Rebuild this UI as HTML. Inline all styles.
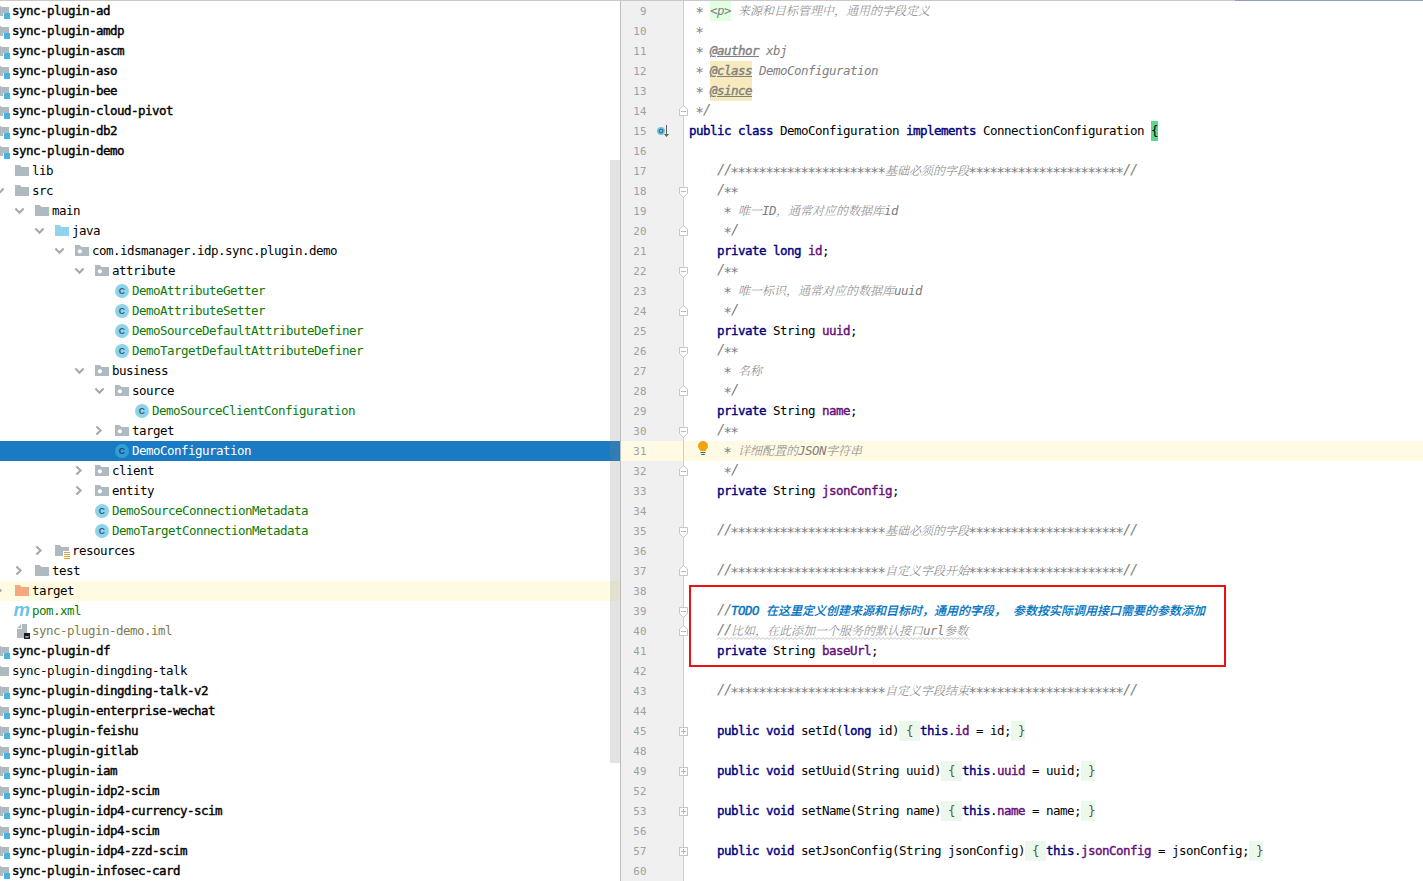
<!DOCTYPE html>
<html lang="zh-CN">
<head>
<meta charset="utf-8">
<title>DemoConfiguration.java</title>
<style>
html,body{margin:0;padding:0;background:#fff;}
body{width:1423px;height:881px;position:relative;overflow:hidden;font-family:"DejaVu Sans Mono", "Liberation Mono", monospace;font-size:12.5px;letter-spacing:-0.526px;color:#000;}
.ic{position:absolute;display:block;overflow:visible;}
.topl{position:absolute;left:0;top:0;width:1235px;height:1px;background:#c9c9c9;}
.topr{position:absolute;left:1235px;top:0;width:188px;height:1px;background:#8f9dba;}
.t,.cl,.ln{position:absolute;height:20px;line-height:20px;white-space:pre;}
.t.b{-webkit-text-stroke:0.4px #000;}
.t.g{color:#0a7a0a;}
.t.o{color:#7c7c52;}
.t.w{color:#fff;}
.selrow{position:absolute;left:0;width:620px;height:20px;background:#1a7bc4;}
.yrow{position:absolute;left:0;width:620px;height:20px;background:#fffbe3;}
.sb{position:absolute;left:610px;top:160px;width:10px;height:603px;background:rgba(128,128,128,0.22);}
.gut{position:absolute;left:620px;top:1px;width:63px;height:880px;background:#f0f0f0;border-left:1px solid #bdbdbd;box-sizing:border-box;}
.gline{position:absolute;left:683px;top:1px;width:1px;height:880px;background:#cfcfcf;}
.cur{position:absolute;left:621px;width:802px;height:20px;background:#fffae3;}
.ln{left:621px;width:25.8px;text-align:right;color:#a0a0a0;font-size:10.8px;letter-spacing:0.3px;margin-top:0.5px;}
.cl{left:689px;}
.cl i, .cl b{font-style:normal;font-weight:normal;}
.cl .c{font-style:italic;color:#808080;}
.cl .z{font-style:italic;font-weight:300;color:#858585;font-family:"Liberation Serif","Noto Serif CJK SC",serif;font-size:12px;letter-spacing:0;line-height:0;}
.cl .k{color:#000080;-webkit-text-stroke:0.4px #000080;}
.cl .f{color:#660e7a;-webkit-text-stroke:0.4px #660e7a;}
.cl .p,.cl .wr,.cl .br,.cl .fd{display:inline-block;height:20px;line-height:20px;vertical-align:top;}
.cl .p{background:#e2ffe2;}
.cl .s{position:relative;top:-0.9px;font-size:13.8px;letter-spacing:-1.308px;line-height:0;}
.cl .a{position:relative;left:-0.8px;top:2.2px;font-size:14.5px;letter-spacing:-1.730px;line-height:0;}
.cl .tag{-webkit-text-stroke:0.4px #808080;text-decoration:underline;}
.cl .wr{background:#f7ebbd;}
.cl .br{background:#5ad890;}
.cl .fd{background:#edf8ec;color:#5a5a3a;}
.cl .td{font-style:italic;color:#0073bf;-webkit-text-stroke:0.4px #0073bf;}
.cl .tz{font-weight:500;-webkit-text-stroke:0.12px #0073bf;font-style:italic;color:#0073bf;font-family:"Liberation Sans","Noto Sans CJK SC",sans-serif;font-size:12px;letter-spacing:0;line-height:0;}

.redbox{position:absolute;left:689px;top:585px;width:537px;height:82px;border:2px solid #f00f0f;box-sizing:border-box;}
</style>
</head>
<body>
<div class="gut"></div>
<svg class="ic" style="left:-5px;top:5px" width="16" height="16" viewBox="0 0 16 16"><path d="M0 0H4.6L6.6 2H14V8H8V11H0Z" fill="#afb9c0"/><rect x="9" y="8" width="6" height="6" fill="#40b6e0"/></svg>
<div class="t b" style="left:12px;top:1px">sync-plugin-ad</div>
<svg class="ic" style="left:-5px;top:25px" width="16" height="16" viewBox="0 0 16 16"><path d="M0 0H4.6L6.6 2H14V8H8V11H0Z" fill="#afb9c0"/><rect x="9" y="8" width="6" height="6" fill="#40b6e0"/></svg>
<div class="t b" style="left:12px;top:21px">sync-plugin-amdp</div>
<svg class="ic" style="left:-5px;top:45px" width="16" height="16" viewBox="0 0 16 16"><path d="M0 0H4.6L6.6 2H14V8H8V11H0Z" fill="#afb9c0"/><rect x="9" y="8" width="6" height="6" fill="#40b6e0"/></svg>
<div class="t b" style="left:12px;top:41px">sync-plugin-ascm</div>
<svg class="ic" style="left:-5px;top:65px" width="16" height="16" viewBox="0 0 16 16"><path d="M0 0H4.6L6.6 2H14V8H8V11H0Z" fill="#afb9c0"/><rect x="9" y="8" width="6" height="6" fill="#40b6e0"/></svg>
<div class="t b" style="left:12px;top:61px">sync-plugin-aso</div>
<svg class="ic" style="left:-5px;top:85px" width="16" height="16" viewBox="0 0 16 16"><path d="M0 0H4.6L6.6 2H14V8H8V11H0Z" fill="#afb9c0"/><rect x="9" y="8" width="6" height="6" fill="#40b6e0"/></svg>
<div class="t b" style="left:12px;top:81px">sync-plugin-bee</div>
<svg class="ic" style="left:-5px;top:105px" width="16" height="16" viewBox="0 0 16 16"><path d="M0 0H4.6L6.6 2H14V8H8V11H0Z" fill="#afb9c0"/><rect x="9" y="8" width="6" height="6" fill="#40b6e0"/></svg>
<div class="t b" style="left:12px;top:101px">sync-plugin-cloud-pivot</div>
<svg class="ic" style="left:-5px;top:125px" width="16" height="16" viewBox="0 0 16 16"><path d="M0 0H4.6L6.6 2H14V8H8V11H0Z" fill="#afb9c0"/><rect x="9" y="8" width="6" height="6" fill="#40b6e0"/></svg>
<div class="t b" style="left:12px;top:121px">sync-plugin-db2</div>
<svg class="ic" style="left:-5px;top:145px" width="16" height="16" viewBox="0 0 16 16"><path d="M0 0H4.6L6.6 2H14V8H8V11H0Z" fill="#afb9c0"/><rect x="9" y="8" width="6" height="6" fill="#40b6e0"/></svg>
<div class="t b" style="left:12px;top:141px">sync-plugin-demo</div>
<svg class="ic" style="left:15px;top:165px" width="14" height="11" viewBox="0 0 14 11"><path d="M0 0H4.6L6.6 2H14V11H0Z" fill="#afb9c0"/></svg>
<div class="t" style="left:32px;top:161px">lib</div>
<svg class="ic" style="left:-6px;top:187px" width="11" height="8" viewBox="0 0 11 8"><path d="M1.400 1.600L5.500 5.700L9.600 1.600" fill="none" stroke="#a8a8a8" stroke-width="2.100"/></svg>
<svg class="ic" style="left:15px;top:185px" width="14" height="11" viewBox="0 0 14 11"><path d="M0 0H4.6L6.6 2H14V11H0Z" fill="#afb9c0"/></svg>
<div class="t" style="left:32px;top:181px">src</div>
<svg class="ic" style="left:14px;top:207px" width="11" height="8" viewBox="0 0 11 8"><path d="M1.400 1.600L5.500 5.700L9.600 1.600" fill="none" stroke="#a8a8a8" stroke-width="2.100"/></svg>
<svg class="ic" style="left:35px;top:205px" width="14" height="11" viewBox="0 0 14 11"><path d="M0 0H4.6L6.6 2H14V11H0Z" fill="#afb9c0"/></svg>
<div class="t" style="left:52px;top:201px">main</div>
<svg class="ic" style="left:34px;top:227px" width="11" height="8" viewBox="0 0 11 8"><path d="M1.400 1.600L5.500 5.700L9.600 1.600" fill="none" stroke="#a8a8a8" stroke-width="2.100"/></svg>
<svg class="ic" style="left:55px;top:225px" width="14" height="11" viewBox="0 0 14 11"><path d="M0 0H4.6L6.6 2H14V11H0Z" fill="#8fd4ec"/></svg>
<div class="t" style="left:72px;top:221px">java</div>
<svg class="ic" style="left:54px;top:247px" width="11" height="8" viewBox="0 0 11 8"><path d="M1.400 1.600L5.500 5.700L9.600 1.600" fill="none" stroke="#a8a8a8" stroke-width="2.100"/></svg>
<svg class="ic" style="left:75px;top:245px" width="14" height="11" viewBox="0 0 14 11"><path d="M0 0H4.6L6.6 2H14V11H0Z" fill="#afb9c0"/><circle cx="4.9" cy="6.3" r="2.1" fill="#fff"/></svg>
<div class="t" style="left:92px;top:241px">com.idsmanager.idp.sync.plugin.demo</div>
<svg class="ic" style="left:74px;top:267px" width="11" height="8" viewBox="0 0 11 8"><path d="M1.400 1.600L5.500 5.700L9.600 1.600" fill="none" stroke="#a8a8a8" stroke-width="2.100"/></svg>
<svg class="ic" style="left:95px;top:265px" width="14" height="11" viewBox="0 0 14 11"><path d="M0 0H4.6L6.6 2H14V11H0Z" fill="#afb9c0"/><circle cx="4.9" cy="6.3" r="2.1" fill="#fff"/></svg>
<div class="t" style="left:112px;top:261px">attribute</div>
<svg class="ic" style="left:115px;top:284px" width="14" height="14" viewBox="0 0 14 14"><circle cx="7" cy="7" r="7" fill="#8cd3ec"/><text x="6.800" y="10.350" text-anchor="middle" font-family="'Liberation Sans', sans-serif" font-size="8.600" font-weight="bold" letter-spacing="0" fill="#42555d">C</text></svg>
<div class="t g" style="left:132px;top:281px">DemoAttributeGetter</div>
<svg class="ic" style="left:115px;top:304px" width="14" height="14" viewBox="0 0 14 14"><circle cx="7" cy="7" r="7" fill="#8cd3ec"/><text x="6.800" y="10.350" text-anchor="middle" font-family="'Liberation Sans', sans-serif" font-size="8.600" font-weight="bold" letter-spacing="0" fill="#42555d">C</text></svg>
<div class="t g" style="left:132px;top:301px">DemoAttributeSetter</div>
<svg class="ic" style="left:115px;top:324px" width="14" height="14" viewBox="0 0 14 14"><circle cx="7" cy="7" r="7" fill="#8cd3ec"/><text x="6.800" y="10.350" text-anchor="middle" font-family="'Liberation Sans', sans-serif" font-size="8.600" font-weight="bold" letter-spacing="0" fill="#42555d">C</text></svg>
<div class="t g" style="left:132px;top:321px">DemoSourceDefaultAttributeDefiner</div>
<svg class="ic" style="left:115px;top:344px" width="14" height="14" viewBox="0 0 14 14"><circle cx="7" cy="7" r="7" fill="#8cd3ec"/><text x="6.800" y="10.350" text-anchor="middle" font-family="'Liberation Sans', sans-serif" font-size="8.600" font-weight="bold" letter-spacing="0" fill="#42555d">C</text></svg>
<div class="t g" style="left:132px;top:341px">DemoTargetDefaultAttributeDefiner</div>
<svg class="ic" style="left:74px;top:367px" width="11" height="8" viewBox="0 0 11 8"><path d="M1.400 1.600L5.500 5.700L9.600 1.600" fill="none" stroke="#a8a8a8" stroke-width="2.100"/></svg>
<svg class="ic" style="left:95px;top:365px" width="14" height="11" viewBox="0 0 14 11"><path d="M0 0H4.6L6.6 2H14V11H0Z" fill="#afb9c0"/><circle cx="4.9" cy="6.3" r="2.1" fill="#fff"/></svg>
<div class="t" style="left:112px;top:361px">business</div>
<svg class="ic" style="left:94px;top:387px" width="11" height="8" viewBox="0 0 11 8"><path d="M1.400 1.600L5.500 5.700L9.600 1.600" fill="none" stroke="#a8a8a8" stroke-width="2.100"/></svg>
<svg class="ic" style="left:115px;top:385px" width="14" height="11" viewBox="0 0 14 11"><path d="M0 0H4.6L6.6 2H14V11H0Z" fill="#afb9c0"/><circle cx="4.9" cy="6.3" r="2.1" fill="#fff"/></svg>
<div class="t" style="left:132px;top:381px">source</div>
<svg class="ic" style="left:135px;top:404px" width="14" height="14" viewBox="0 0 14 14"><circle cx="7" cy="7" r="7" fill="#8cd3ec"/><text x="6.800" y="10.350" text-anchor="middle" font-family="'Liberation Sans', sans-serif" font-size="8.600" font-weight="bold" letter-spacing="0" fill="#42555d">C</text></svg>
<div class="t g" style="left:152px;top:401px">DemoSourceClientConfiguration</div>
<svg class="ic" style="left:95px;top:425px" width="8" height="11" viewBox="0 0 8 11"><path d="M1.400 1.600L5.600 5.600L1.400 9.600" fill="none" stroke="#a8a8a8" stroke-width="2.100"/></svg>
<svg class="ic" style="left:115px;top:425px" width="14" height="11" viewBox="0 0 14 11"><path d="M0 0H4.6L6.6 2H14V11H0Z" fill="#afb9c0"/><circle cx="4.9" cy="6.3" r="2.1" fill="#fff"/></svg>
<div class="t" style="left:132px;top:421px">target</div>
<div class="selrow" style="top:441px"></div>
<svg class="ic" style="left:115px;top:444px" width="14" height="14" viewBox="0 0 14 14"><circle cx="7" cy="7" r="7" fill="#319ed5"/><text x="6.800" y="10.350" text-anchor="middle" font-family="'Liberation Sans', sans-serif" font-size="8.600" font-weight="bold" letter-spacing="0" fill="#274556">C</text></svg>
<div class="t w" style="left:132px;top:441px">DemoConfiguration</div>
<svg class="ic" style="left:75px;top:465px" width="8" height="11" viewBox="0 0 8 11"><path d="M1.400 1.600L5.600 5.600L1.400 9.600" fill="none" stroke="#a8a8a8" stroke-width="2.100"/></svg>
<svg class="ic" style="left:95px;top:465px" width="14" height="11" viewBox="0 0 14 11"><path d="M0 0H4.6L6.6 2H14V11H0Z" fill="#afb9c0"/><circle cx="4.9" cy="6.3" r="2.1" fill="#fff"/></svg>
<div class="t" style="left:112px;top:461px">client</div>
<svg class="ic" style="left:75px;top:485px" width="8" height="11" viewBox="0 0 8 11"><path d="M1.400 1.600L5.600 5.600L1.400 9.600" fill="none" stroke="#a8a8a8" stroke-width="2.100"/></svg>
<svg class="ic" style="left:95px;top:485px" width="14" height="11" viewBox="0 0 14 11"><path d="M0 0H4.6L6.6 2H14V11H0Z" fill="#afb9c0"/><circle cx="4.9" cy="6.3" r="2.1" fill="#fff"/></svg>
<div class="t" style="left:112px;top:481px">entity</div>
<svg class="ic" style="left:95px;top:504px" width="14" height="14" viewBox="0 0 14 14"><circle cx="7" cy="7" r="7" fill="#8cd3ec"/><text x="6.800" y="10.350" text-anchor="middle" font-family="'Liberation Sans', sans-serif" font-size="8.600" font-weight="bold" letter-spacing="0" fill="#42555d">C</text></svg>
<div class="t g" style="left:112px;top:501px">DemoSourceConnectionMetadata</div>
<svg class="ic" style="left:95px;top:524px" width="14" height="14" viewBox="0 0 14 14"><circle cx="7" cy="7" r="7" fill="#8cd3ec"/><text x="6.800" y="10.350" text-anchor="middle" font-family="'Liberation Sans', sans-serif" font-size="8.600" font-weight="bold" letter-spacing="0" fill="#42555d">C</text></svg>
<div class="t g" style="left:112px;top:521px">DemoTargetConnectionMetadata</div>
<svg class="ic" style="left:35px;top:545px" width="8" height="11" viewBox="0 0 8 11"><path d="M1.400 1.600L5.600 5.600L1.400 9.600" fill="none" stroke="#a8a8a8" stroke-width="2.100"/></svg>
<svg class="ic" style="left:55px;top:545px" width="16" height="16" viewBox="0 0 16 16"><path d="M0 0H4.6L6.6 2H14V6H8V11H0Z" fill="#afb9c0"/><path d="M9 7h6v1h-6zM9 9h6v1h-6zM9 11h6v1h-6zM9 13h6v1h-6z" fill="#d9a343"/></svg>
<div class="t" style="left:72px;top:541px">resources</div>
<svg class="ic" style="left:15px;top:565px" width="8" height="11" viewBox="0 0 8 11"><path d="M1.400 1.600L5.600 5.600L1.400 9.600" fill="none" stroke="#a8a8a8" stroke-width="2.100"/></svg>
<svg class="ic" style="left:35px;top:565px" width="14" height="11" viewBox="0 0 14 11"><path d="M0 0H4.6L6.6 2H14V11H0Z" fill="#afb9c0"/></svg>
<div class="t" style="left:52px;top:561px">test</div>
<div class="yrow" style="top:581px"></div>
<svg class="ic" style="left:-5px;top:585px" width="8" height="11" viewBox="0 0 8 11"><path d="M1.400 1.600L5.600 5.600L1.400 9.600" fill="none" stroke="#a8a8a8" stroke-width="2.100"/></svg>
<svg class="ic" style="left:15px;top:585px" width="14" height="11" viewBox="0 0 14 11"><path d="M0 0H4.6L6.6 2H14V11H0Z" fill="#f4a87e"/></svg>
<div class="t" style="left:32px;top:581px">target</div>
<svg class="ic" style="left:13px;top:603px" width="20" height="16" viewBox="0 0 20 16"><text x="0.5" y="13" font-family="'Liberation Sans', sans-serif" font-size="19" font-weight="bold" font-style="italic" fill="#6cc4e6" textLength="16" lengthAdjust="spacingAndGlyphs">m</text></svg>
<div class="t g" style="left:32px;top:601px">pom.xml</div>
<svg class="ic" style="left:15px;top:624px" width="16" height="16" viewBox="0 0 16 16"><path d="M2 4.2L6.2 0V4.2Z" fill="#afb9c0"/><path d="M7 0H12V9H9V14H2V5H7Z" fill="#afb9c0"/><rect x="9" y="9" width="6" height="6" fill="#1e1e1e"/><rect x="10.300" y="12.400" width="3.400" height="1" fill="#fff"/></svg>
<div class="t o" style="left:32px;top:621px">sync-plugin-demo.iml</div>
<svg class="ic" style="left:-5px;top:645px" width="16" height="16" viewBox="0 0 16 16"><path d="M0 0H4.6L6.6 2H14V8H8V11H0Z" fill="#afb9c0"/><rect x="9" y="8" width="6" height="6" fill="#40b6e0"/></svg>
<div class="t b" style="left:12px;top:641px">sync-plugin-df</div>
<svg class="ic" style="left:-5px;top:665px" width="14" height="11" viewBox="0 0 14 11"><path d="M0 0H4.6L6.6 2H14V11H0Z" fill="#afb9c0"/></svg>
<div class="t" style="left:12px;top:661px">sync-plugin-dingding-talk</div>
<svg class="ic" style="left:-5px;top:685px" width="16" height="16" viewBox="0 0 16 16"><path d="M0 0H4.6L6.6 2H14V8H8V11H0Z" fill="#afb9c0"/><rect x="9" y="8" width="6" height="6" fill="#40b6e0"/></svg>
<div class="t b" style="left:12px;top:681px">sync-plugin-dingding-talk-v2</div>
<svg class="ic" style="left:-5px;top:705px" width="16" height="16" viewBox="0 0 16 16"><path d="M0 0H4.6L6.6 2H14V8H8V11H0Z" fill="#afb9c0"/><rect x="9" y="8" width="6" height="6" fill="#40b6e0"/></svg>
<div class="t b" style="left:12px;top:701px">sync-plugin-enterprise-wechat</div>
<svg class="ic" style="left:-5px;top:725px" width="16" height="16" viewBox="0 0 16 16"><path d="M0 0H4.6L6.6 2H14V8H8V11H0Z" fill="#afb9c0"/><rect x="9" y="8" width="6" height="6" fill="#40b6e0"/></svg>
<div class="t b" style="left:12px;top:721px">sync-plugin-feishu</div>
<svg class="ic" style="left:-5px;top:745px" width="16" height="16" viewBox="0 0 16 16"><path d="M0 0H4.6L6.6 2H14V8H8V11H0Z" fill="#afb9c0"/><rect x="9" y="8" width="6" height="6" fill="#40b6e0"/></svg>
<div class="t b" style="left:12px;top:741px">sync-plugin-gitlab</div>
<svg class="ic" style="left:-5px;top:765px" width="16" height="16" viewBox="0 0 16 16"><path d="M0 0H4.6L6.6 2H14V8H8V11H0Z" fill="#afb9c0"/><rect x="9" y="8" width="6" height="6" fill="#40b6e0"/></svg>
<div class="t b" style="left:12px;top:761px">sync-plugin-iam</div>
<svg class="ic" style="left:-5px;top:785px" width="16" height="16" viewBox="0 0 16 16"><path d="M0 0H4.6L6.6 2H14V8H8V11H0Z" fill="#afb9c0"/><rect x="9" y="8" width="6" height="6" fill="#40b6e0"/></svg>
<div class="t b" style="left:12px;top:781px">sync-plugin-idp2-scim</div>
<svg class="ic" style="left:-5px;top:805px" width="16" height="16" viewBox="0 0 16 16"><path d="M0 0H4.6L6.6 2H14V8H8V11H0Z" fill="#afb9c0"/><rect x="9" y="8" width="6" height="6" fill="#40b6e0"/></svg>
<div class="t b" style="left:12px;top:801px">sync-plugin-idp4-currency-scim</div>
<svg class="ic" style="left:-5px;top:825px" width="16" height="16" viewBox="0 0 16 16"><path d="M0 0H4.6L6.6 2H14V8H8V11H0Z" fill="#afb9c0"/><rect x="9" y="8" width="6" height="6" fill="#40b6e0"/></svg>
<div class="t b" style="left:12px;top:821px">sync-plugin-idp4-scim</div>
<svg class="ic" style="left:-5px;top:845px" width="16" height="16" viewBox="0 0 16 16"><path d="M0 0H4.6L6.6 2H14V8H8V11H0Z" fill="#afb9c0"/><rect x="9" y="8" width="6" height="6" fill="#40b6e0"/></svg>
<div class="t b" style="left:12px;top:841px">sync-plugin-idp4-zzd-scim</div>
<svg class="ic" style="left:-5px;top:865px" width="16" height="16" viewBox="0 0 16 16"><path d="M0 0H4.6L6.6 2H14V8H8V11H0Z" fill="#afb9c0"/><rect x="9" y="8" width="6" height="6" fill="#40b6e0"/></svg>
<div class="t b" style="left:12px;top:861px">sync-plugin-infosec-card</div>
<div class="sb"></div>
<div class="cur" style="top:441px"></div>
<div class="gline"></div>
<div class="ln" style="top:1px">9</div>
<div class="cl" style="top:1px"><i class="c"> </i><i class="c a">*</i><i class="c"> </i><i class="c p">&lt;p&gt;</i><i class="c"> </i><i class="z">来源和目标管理中，通用的字段定义</i></div>
<div class="ln" style="top:21px">10</div>
<div class="cl" style="top:21px"><i class="c"> </i><i class="c a">*</i></div>
<div class="ln" style="top:41px">11</div>
<div class="cl" style="top:41px"><i class="c"> </i><i class="c a">*</i><i class="c"> </i><i class="c tag">@author</i><i class="c"> xbj</i></div>
<div class="ln" style="top:61px">12</div>
<div class="cl" style="top:61px"><i class="c"> </i><i class="c a">*</i><i class="c"> </i><i class="c tag wr">@class</i><i class="c"> DemoConfiguration</i></div>
<div class="ln" style="top:81px">13</div>
<div class="cl" style="top:81px"><i class="c"> </i><i class="c a">*</i><i class="c"> </i><i class="c tag wr">@since</i></div>
<div class="ln" style="top:101px">14</div>
<svg class="ic" style="left:678px;top:105px" width="11" height="12" viewBox="0 0 11 12"><path d="M1.5 4L5.5 0.6L9.5 4V10.5H1.5Z" fill="#fff" stroke="#c6c6c6" stroke-width="1"/><path d="M3 6.5h5" stroke="#b8b8b8" stroke-width="1"/></svg>
<div class="cl" style="top:101px"><i class="c"> </i><i class="c a">*</i><i class="c s">/</i></div>
<div class="ln" style="top:121px">15</div>
<div class="cl" style="top:121px"><b class="k">public</b> <b class="k">class</b> DemoConfiguration <b class="k">implements</b> ConnectionConfiguration <span class="br">{</span></div>
<div class="ln" style="top:141px">16</div>
<div class="ln" style="top:161px">17</div>
<div class="cl" style="top:161px">    <i class="c s">//</i><i class="c a">**********************</i><i class="z">基础必须的字段</i><i class="c a">**********************</i><i class="c s">//</i></div>
<div class="ln" style="top:181px">18</div>
<svg class="ic" style="left:678px;top:187px" width="11" height="12" viewBox="0 0 11 12"><path d="M1.5 0.5H9.500V6.500L5.500 10.400L1.500 6.500Z" fill="#fff" stroke="#c6c6c6" stroke-width="1"/><path d="M3 4.500h5" stroke="#b8b8b8" stroke-width="1"/></svg>
<div class="cl" style="top:181px">    <i class="c s">/</i><i class="c a">**</i></div>
<div class="ln" style="top:201px">19</div>
<div class="cl" style="top:201px">    <i class="c"> </i><i class="c a">*</i><i class="c"> </i><i class="z">唯一</i><i class="c">ID</i><i class="z">，通常对应的数据库</i><i class="c">id</i></div>
<div class="ln" style="top:221px">20</div>
<svg class="ic" style="left:678px;top:225px" width="11" height="12" viewBox="0 0 11 12"><path d="M1.5 4L5.5 0.6L9.5 4V10.5H1.5Z" fill="#fff" stroke="#c6c6c6" stroke-width="1"/><path d="M3 6.5h5" stroke="#b8b8b8" stroke-width="1"/></svg>
<div class="cl" style="top:221px">    <i class="c"> </i><i class="c a">*</i><i class="c s">/</i></div>
<div class="ln" style="top:241px">21</div>
<div class="cl" style="top:241px">    <b class="k">private</b> <b class="k">long</b> <b class="f">id</b>;</div>
<div class="ln" style="top:261px">22</div>
<svg class="ic" style="left:678px;top:267px" width="11" height="12" viewBox="0 0 11 12"><path d="M1.5 0.5H9.500V6.500L5.500 10.400L1.500 6.500Z" fill="#fff" stroke="#c6c6c6" stroke-width="1"/><path d="M3 4.500h5" stroke="#b8b8b8" stroke-width="1"/></svg>
<div class="cl" style="top:261px">    <i class="c s">/</i><i class="c a">**</i></div>
<div class="ln" style="top:281px">23</div>
<div class="cl" style="top:281px">    <i class="c"> </i><i class="c a">*</i><i class="c"> </i><i class="z">唯一标识，通常对应的数据库</i><i class="c">uuid</i></div>
<div class="ln" style="top:301px">24</div>
<svg class="ic" style="left:678px;top:305px" width="11" height="12" viewBox="0 0 11 12"><path d="M1.5 4L5.5 0.6L9.5 4V10.5H1.5Z" fill="#fff" stroke="#c6c6c6" stroke-width="1"/><path d="M3 6.5h5" stroke="#b8b8b8" stroke-width="1"/></svg>
<div class="cl" style="top:301px">    <i class="c"> </i><i class="c a">*</i><i class="c s">/</i></div>
<div class="ln" style="top:321px">25</div>
<div class="cl" style="top:321px">    <b class="k">private</b> String <b class="f">uuid</b>;</div>
<div class="ln" style="top:341px">26</div>
<svg class="ic" style="left:678px;top:347px" width="11" height="12" viewBox="0 0 11 12"><path d="M1.5 0.5H9.500V6.500L5.500 10.400L1.500 6.500Z" fill="#fff" stroke="#c6c6c6" stroke-width="1"/><path d="M3 4.500h5" stroke="#b8b8b8" stroke-width="1"/></svg>
<div class="cl" style="top:341px">    <i class="c s">/</i><i class="c a">**</i></div>
<div class="ln" style="top:361px">27</div>
<div class="cl" style="top:361px">    <i class="c"> </i><i class="c a">*</i><i class="c"> </i><i class="z">名称</i></div>
<div class="ln" style="top:381px">28</div>
<svg class="ic" style="left:678px;top:385px" width="11" height="12" viewBox="0 0 11 12"><path d="M1.5 4L5.5 0.6L9.5 4V10.5H1.5Z" fill="#fff" stroke="#c6c6c6" stroke-width="1"/><path d="M3 6.5h5" stroke="#b8b8b8" stroke-width="1"/></svg>
<div class="cl" style="top:381px">    <i class="c"> </i><i class="c a">*</i><i class="c s">/</i></div>
<div class="ln" style="top:401px">29</div>
<div class="cl" style="top:401px">    <b class="k">private</b> String <b class="f">name</b>;</div>
<div class="ln" style="top:421px">30</div>
<svg class="ic" style="left:678px;top:427px" width="11" height="12" viewBox="0 0 11 12"><path d="M1.5 0.5H9.500V6.500L5.500 10.400L1.500 6.500Z" fill="#fff" stroke="#c6c6c6" stroke-width="1"/><path d="M3 4.500h5" stroke="#b8b8b8" stroke-width="1"/></svg>
<div class="cl" style="top:421px">    <i class="c s">/</i><i class="c a">**</i></div>
<div class="ln" style="top:441px">31</div>
<div class="cl" style="top:441px">    <i class="c"> </i><i class="c a">*</i><i class="c"> </i><i class="z">详细配置的</i><i class="c">JSON</i><i class="z">字符串</i></div>
<div class="ln" style="top:461px">32</div>
<svg class="ic" style="left:678px;top:465px" width="11" height="12" viewBox="0 0 11 12"><path d="M1.5 4L5.5 0.6L9.5 4V10.5H1.5Z" fill="#fff" stroke="#c6c6c6" stroke-width="1"/><path d="M3 6.5h5" stroke="#b8b8b8" stroke-width="1"/></svg>
<div class="cl" style="top:461px">    <i class="c"> </i><i class="c a">*</i><i class="c s">/</i></div>
<div class="ln" style="top:481px">33</div>
<div class="cl" style="top:481px">    <b class="k">private</b> String <b class="f">jsonConfig</b>;</div>
<div class="ln" style="top:501px">34</div>
<div class="ln" style="top:521px">35</div>
<svg class="ic" style="left:678px;top:527px" width="11" height="12" viewBox="0 0 11 12"><path d="M1.5 0.5H9.500V6.500L5.500 10.400L1.500 6.500Z" fill="#fff" stroke="#c6c6c6" stroke-width="1"/><path d="M3 4.500h5" stroke="#b8b8b8" stroke-width="1"/></svg>
<div class="cl" style="top:521px">    <i class="c s">//</i><i class="c a">**********************</i><i class="z">基础必须的字段</i><i class="c a">**********************</i><i class="c s">//</i></div>
<div class="ln" style="top:541px">36</div>
<div class="ln" style="top:561px">37</div>
<svg class="ic" style="left:678px;top:565px" width="11" height="12" viewBox="0 0 11 12"><path d="M1.5 4L5.5 0.6L9.5 4V10.5H1.5Z" fill="#fff" stroke="#c6c6c6" stroke-width="1"/><path d="M3 6.5h5" stroke="#b8b8b8" stroke-width="1"/></svg>
<div class="cl" style="top:561px">    <i class="c s">//</i><i class="c a">**********************</i><i class="z">自定义字段开始</i><i class="c a">**********************</i><i class="c s">//</i></div>
<div class="ln" style="top:581px">38</div>
<div class="ln" style="top:601px">39</div>
<svg class="ic" style="left:678px;top:607px" width="11" height="12" viewBox="0 0 11 12"><path d="M1.5 0.5H9.500V6.500L5.500 10.400L1.500 6.500Z" fill="#fff" stroke="#c6c6c6" stroke-width="1"/><path d="M3 4.500h5" stroke="#b8b8b8" stroke-width="1"/></svg>
<div class="cl" style="top:601px">    <i class="c s">//</i><b class="td">TODO </b><b class="tz">在这里定义创建来源和目标时，通用的字段，</b><b class="td"> </b><b class="tz">参数按实际调用接口需要的参数添加</b></div>
<div class="ln" style="top:621px">40</div>
<svg class="ic" style="left:678px;top:625px" width="11" height="12" viewBox="0 0 11 12"><path d="M1.5 4L5.5 0.6L9.5 4V10.5H1.5Z" fill="#fff" stroke="#c6c6c6" stroke-width="1"/><path d="M3 6.5h5" stroke="#b8b8b8" stroke-width="1"/></svg>
<div class="cl" style="top:621px">    <span class="wv"><i class="c s">//</i><i class="z">比如，在此添加一个服务的默认接口</i><i class="c">url</i><i class="z">参数</i></span></div>
<div class="ln" style="top:641px">41</div>
<div class="cl" style="top:641px">    <b class="k">private</b> String <b class="f">baseUrl</b>;</div>
<div class="ln" style="top:661px">42</div>
<div class="ln" style="top:681px">43</div>
<div class="cl" style="top:681px">    <i class="c s">//</i><i class="c a">**********************</i><i class="z">自定义字段结束</i><i class="c a">**********************</i><i class="c s">//</i></div>
<div class="ln" style="top:701px">44</div>
<div class="ln" style="top:721px">45</div>
<svg class="ic" style="left:678px;top:727px" width="11" height="11" viewBox="0 0 11 11"><rect x="1.5" y="0.5" width="8" height="8" fill="#fff" stroke="#c6c6c6" stroke-width="1"/><path d="M3 4.500h5M5.500 2v5" stroke="#b8b8b8" stroke-width="1"/></svg>
<div class="cl" style="top:721px">    <b class="k">public</b> <b class="k">void</b> setId(<b class="k">long</b> id)<span class="fd"> { </span><b class="k">this</b>.<b class="f">id</b> = id;<span class="fd"> }</span></div>
<div class="ln" style="top:741px">48</div>
<div class="ln" style="top:761px">49</div>
<svg class="ic" style="left:678px;top:767px" width="11" height="11" viewBox="0 0 11 11"><rect x="1.5" y="0.5" width="8" height="8" fill="#fff" stroke="#c6c6c6" stroke-width="1"/><path d="M3 4.500h5M5.500 2v5" stroke="#b8b8b8" stroke-width="1"/></svg>
<div class="cl" style="top:761px">    <b class="k">public</b> <b class="k">void</b> setUuid(String uuid)<span class="fd"> { </span><b class="k">this</b>.<b class="f">uuid</b> = uuid;<span class="fd"> }</span></div>
<div class="ln" style="top:781px">52</div>
<div class="ln" style="top:801px">53</div>
<svg class="ic" style="left:678px;top:807px" width="11" height="11" viewBox="0 0 11 11"><rect x="1.5" y="0.5" width="8" height="8" fill="#fff" stroke="#c6c6c6" stroke-width="1"/><path d="M3 4.500h5M5.500 2v5" stroke="#b8b8b8" stroke-width="1"/></svg>
<div class="cl" style="top:801px">    <b class="k">public</b> <b class="k">void</b> setName(String name)<span class="fd"> { </span><b class="k">this</b>.<b class="f">name</b> = name;<span class="fd"> }</span></div>
<div class="ln" style="top:821px">56</div>
<div class="ln" style="top:841px">57</div>
<svg class="ic" style="left:678px;top:847px" width="11" height="11" viewBox="0 0 11 11"><rect x="1.5" y="0.5" width="8" height="8" fill="#fff" stroke="#c6c6c6" stroke-width="1"/><path d="M3 4.500h5M5.500 2v5" stroke="#b8b8b8" stroke-width="1"/></svg>
<div class="cl" style="top:841px">    <b class="k">public</b> <b class="k">void</b> setJsonConfig(String jsonConfig)<span class="fd"> { </span><b class="k">this</b>.<b class="f">jsonConfig</b> = jsonConfig;<span class="fd"> }</span></div>
<div class="ln" style="top:861px">60</div>
<svg class="ic" style="left:655px;top:124px" width="16" height="16" viewBox="0 0 16 16"><circle cx="6" cy="7" r="4" fill="#6cc4e6"/><circle cx="6" cy="7" r="1.9" fill="none" stroke="#3b5866" stroke-width="1"/><path d="M11.5 1v11" stroke="#606060" stroke-width="1"/><path d="M9 10h5l-2.5 3z" fill="#606060"/></svg>
<svg class="ic" style="left:696px;top:440px" width="14" height="18" viewBox="0 0 14 18"><path d="M7 1a5 5 0 0 1 5 5c0 2.100-1.400 3-2 4.200-.2.500-.2.800-.2.800h-5.600s0-.3-.2-.8C3.400 9 2 8.100 2 6a5 5 0 0 1 5-5z" fill="#f0a30a"/><path d="M4.500 12.500h5M5.200 14.500h3.600" stroke="#555" stroke-width="1"/></svg>
<svg class="ic" style="left:717px;top:636px" width="252" height="5" viewBox="0 0 252 5"><path d="M0 3.500l2-2l2 2l2-2l2 2l2-2l2 2l2-2l2 2l2-2l2 2l2-2l2 2l2-2l2 2l2-2l2 2l2-2l2 2l2-2l2 2l2-2l2 2l2-2l2 2l2-2l2 2l2-2l2 2l2-2l2 2l2-2l2 2l2-2l2 2l2-2l2 2l2-2l2 2l2-2l2 2l2-2l2 2l2-2l2 2l2-2l2 2l2-2l2 2l2-2l2 2l2-2l2 2l2-2l2 2l2-2l2 2l2-2l2 2l2-2l2 2l2-2l2 2l2-2l2 2l2-2l2 2l2-2l2 2l2-2l2 2l2-2l2 2l2-2l2 2l2-2l2 2l2-2l2 2l2-2l2 2l2-2l2 2l2-2l2 2l2-2l2 2l2-2l2 2l2-2l2 2l2-2l2 2l2-2l2 2l2-2l2 2l2-2l2 2l2-2l2 2l2-2l2 2l2-2l2 2l2-2l2 2l2-2l2 2l2-2l2 2l2-2l2 2l2-2l2 2l2-2l2 2l2-2l2 2l2-2l2 2l2-2l2 2l2-2l2 2l2-2l2 2" fill="none" stroke="#c4c4c4" stroke-width="1"/></svg>
<div class="redbox"></div>
<div class="topl"></div><div class="topr"></div>
</body>
</html>
